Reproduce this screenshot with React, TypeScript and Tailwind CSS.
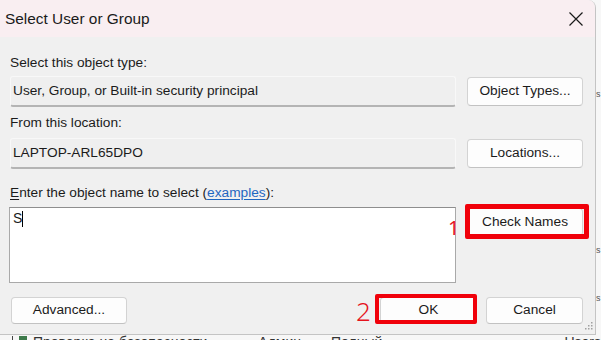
import React from "react";

const font = { fontFamily: '"Liberation Sans", Arial, sans-serif' };

function Btn({ children, className = "" }: { children: React.ReactNode; className?: string }) {
  return (
    <div
      className={
        "flex items-center justify-center rounded-[4px] border border-[#d3d3d3] border-b-[#c2c2c2] bg-[#fdfdfd] text-[13.7px] text-[#1b1b1b] " +
        className
      }
    >
      {children}
    </div>
  );
}

function Field({ children }: { children: React.ReactNode }) {
  return (
    <div className="flex h-[31px] w-[446px] items-center rounded-[3px] border border-[#f8f8f8] border-b-[2px] border-b-[#b4b4b4] bg-[#efefef] pl-[1px] text-[13.7px] text-[#1b1b1b]">
      {children}
    </div>
  );
}

export default function App() {
  return (
    <div className="relative h-[340px] w-[601px] overflow-hidden bg-[#f7f7f7]" style={font}>
      {/* background window fragments (right) */}
      <div className="absolute left-[596px] top-[90px] text-[9px] leading-none text-[#555]">s</div>
      <div className="absolute left-[596px] top-[246px] text-[9px] leading-none text-[#555]">s</div>
      <div className="absolute left-[596px] top-[294px] text-[9px] leading-none text-[#555]">s</div>
      {/* background window fragments (bottom) */}
      <div className="absolute left-[12px] top-[335px] flex items-start gap-[20px] text-[14px] leading-none text-[#333]">
        <span className="flex items-start gap-[6px]">
          <span className="mt-[1px] h-[10px] w-[1px] bg-[#444]" />
          <span className="mt-[1px] h-[10px] w-[10px] bg-[#3d7a4a]" />
          <span>Проверка на безопасности файлов</span>
        </span>
        <span className="ml-[20px]">Админ</span>
        <span className="ml-[10px]">Полный контроль</span>
        <span className="ml-[120px]">Users</span>
      </div>

      {/* dialog */}
      <div className="relative flex h-[335px] w-[596px] flex-col overflow-hidden rounded-tr-[8px] border-r border-b border-[#c4c4c4] bg-[#f0f0f0]">
        {/* title bar */}
        <div className="flex h-[37px] shrink-0 items-center justify-between bg-[#f9eef1] pl-[5px] pr-[12px]">
          <span className="text-[15.4px] text-[#1a1a1a]">Select User or Group</span>
          <svg width="14" height="14" viewBox="0 0 14 14" className="mt-[1px]">
            <path d="M0.5 0.5 L13.5 13.5 M13.5 0.5 L0.5 13.5" stroke="#1a1a1a" strokeWidth="1.2" fill="none" />
          </svg>
        </div>

        <div className="flex flex-col pl-[10px] pr-[12px]">
          <div className="mt-[18px] h-[16px] text-[13.7px] leading-[16px] text-[#1b1b1b]">Select this object type:</div>
          <div className="mt-[5px] flex items-center justify-between">
            <Field>
              <span className="pl-[1px]">User, Group, or Built-in security principal</span>
            </Field>
            <Btn className="h-[29px] w-[116px]">Object Types...</Btn>
          </div>

          <div className="mt-[8px] h-[16px] text-[13.7px] leading-[16px] text-[#1b1b1b]">From this location:</div>
          <div className="mt-[7px] flex items-center justify-between">
            <Field>
              <span className="pl-[1px]">LAPTOP-ARL65DPO</span>
            </Field>
            <Btn className="h-[29px] w-[116px]">Locations...</Btn>
          </div>

          <div className="mt-[16px] h-[16px] text-[13.7px] leading-[16px] text-[#1b1b1b]">
            <span className="underline underline-offset-2">E</span>nter the object name to select (
            <span className="text-[#1f66c1] underline underline-offset-2">examples</span>):
          </div>
          <div className="mt-[6px] flex items-start justify-between">
            <div className="-ml-[1px] flex h-[76px] w-[447px] items-start border border-[#a9a9a9] border-t-[#8e8e8e] bg-white pl-[3px] pt-[2px]">
              <span className="text-[14px] leading-[17px] text-[#1b1b1b]">S</span>
              <span className="mt-[1px] h-[16px] w-[1px] bg-black" />
            </div>
            <div className="relative">
              <Btn className="mt-[1px] h-[28px] w-[116px]">Check Names</Btn>
            </div>
          </div>

          <div className="mt-[14px] flex items-center">
            <Btn className="ml-[1px] h-[27px] w-[116px]">Advanced...</Btn>
            <div className="flex-1" />
            <Btn className="h-[27px] w-[97px]">OK</Btn>
            <Btn className="ml-[9px] h-[27px] w-[97px]">Cancel</Btn>
          </div>
        </div>

        {/* resize grip */}
        <svg className="absolute bottom-[2px] right-[2px]" width="10" height="10" viewBox="0 0 10 10">
          <g fill="#a0a0a0">
            <rect x="8" y="0" width="1.5" height="1.5" />
            <rect x="5" y="3" width="1.5" height="1.5" />
            <rect x="8" y="3" width="1.5" height="1.5" />
            <rect x="2" y="6" width="1.5" height="1.5" />
            <rect x="5" y="6" width="1.5" height="1.5" />
            <rect x="8" y="6" width="1.5" height="1.5" />
          </g>
        </svg>
      </div>

      {/* annotations */}
      <div className="absolute left-[465px] top-[204px] h-[35px] w-[124px] rounded-[2px] border-[5px] border-[#f0000a]" />
      <div className="absolute left-[375px] top-[294px] h-[30px] w-[102px] rounded-[2px] border-[4px] border-[#f0000a]" />
      <div
        className="absolute left-[448px] top-[218px] text-[20px] font-normal leading-none text-[#e5141c]"
        style={{ fontFamily: '"Noto Sans", sans-serif' }}
      >
        1
      </div>
      <div
        className="absolute left-[356px] top-[298px] text-[26px] font-light leading-none text-[#e5141c]"
        style={{ fontFamily: '"Noto Sans", sans-serif' }}
      >
        2
      </div>
    </div>
  );
}
